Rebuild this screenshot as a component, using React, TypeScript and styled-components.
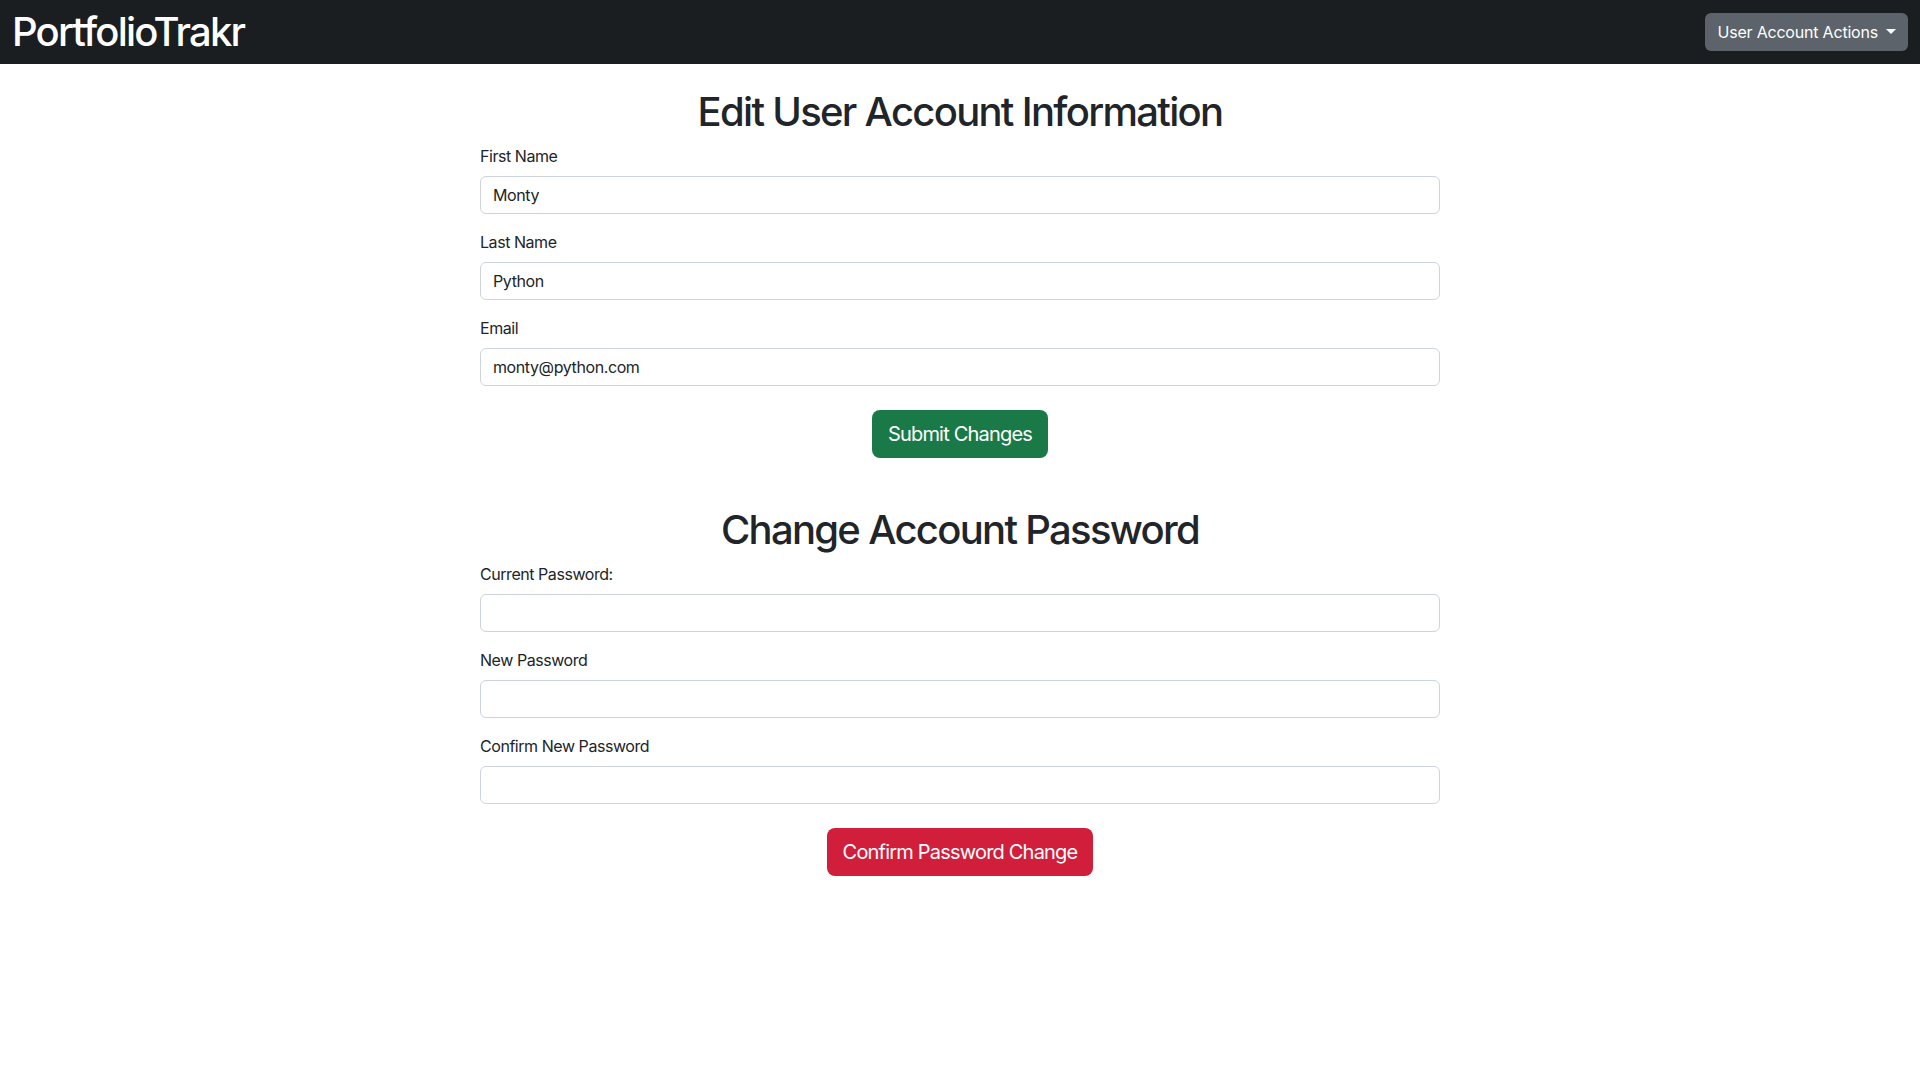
import { createGlobalStyle, styled } from 'styled-components';

const GlobalStyle = createGlobalStyle`
  body {
    margin: 0;
    font-family: Inter, "Noto Sans", "Liberation Sans", sans-serif;
    font-size: 16px;
    line-height: 1.5;
    color: #212529;
    background: #fff;
  }
  * {
    box-sizing: border-box;
  }
`;

const Navbar = styled.nav`
  height: 64px;
  padding: 0 12px;
  display: flex;
  justify-content: space-between;
  align-items: center;
  background: #1b1e21;
`;

const Brand = styled.a`
  font-size: 40px;
  font-weight: 500;
  letter-spacing: -1.8px;
  line-height: 1.2;
  color: #fff;
  text-decoration: none;
`;

const DropdownToggle = styled.button`
  height: 38px;
  padding: 0 12px;
  border: none;
  border-radius: 6px;
  background: #5c636a;
  color: #fff;
  font-family: inherit;
  font-size: 16px;
  display: flex;
  align-items: center;
  letter-spacing: -0.2px;

  &::after {
    content: '';
    display: inline-block;
    margin-left: 8px;
    margin-top: -2px;
    border-top: 5px solid #fff;
    border-left: 5px solid transparent;
    border-right: 5px solid transparent;
  }
`;

const Main = styled.main`
  width: 50%;
  margin: 0 auto;
  padding-top: 24px;
`;

const Section = styled.form<{ $gap?: number }>`
  display: flex;
  flex-direction: column;
  margin-top: ${(p) => p.$gap ?? 0}px;
`;

const Heading = styled.h1`
  margin: 0 0 8px;
  font-size: 40px;
  font-weight: 500;
  line-height: 1.2;
  letter-spacing: -1.7px;
  text-align: center;
`;

const Field = styled.div`
  margin-bottom: 16px;
`;

const Label = styled.label`
  display: block;
  margin-bottom: 8px;
  font-size: 16px;
  letter-spacing: -0.45px;
`;

const Input = styled.input`
  display: block;
  width: 100%;
  height: 38px;
  padding: 6px 12px;
  font-family: inherit;
  font-size: 16px;
  letter-spacing: -0.4px;
  color: #212529;
  border: 1px solid #ced4da;
  border-radius: 6px;
  background: #fff;
  outline: none;
`;

const Actions = styled.div`
  display: flex;
  justify-content: center;
  margin-top: 8px;
`;

const Button = styled.button<{ $variant: 'success' | 'danger' }>`
  height: 48px;
  padding: 0 16px;
  border: none;
  border-radius: 8px;
  font-family: inherit;
  font-size: 20px;
  letter-spacing: -0.8px;
  color: #fff;
  background: ${(p) => (p.$variant === 'success' ? '#1a7a47' : '#d11e3a')};
  cursor: pointer;
`;

const profileFields = [
  { label: 'First Name', value: 'Monty', type: 'text' },
  { label: 'Last Name', value: 'Python', type: 'text' },
  { label: 'Email', value: 'monty@python.com', type: 'email' },
];

const passwordFields = ['Current Password:', 'New Password', 'Confirm New Password'];

export default function App() {
  return (
    <>
      <GlobalStyle />
      <Navbar>
        <Brand href="#">PortfolioTrakr</Brand>
        <DropdownToggle type="button">User Account Actions</DropdownToggle>
      </Navbar>
      <Main>
        <Section onSubmit={(e) => e.preventDefault()}>
          <Heading>Edit User Account Information</Heading>
          {profileFields.map((f) => (
            <Field key={f.label}>
              <Label>{f.label}</Label>
              <Input type={f.type} defaultValue={f.value} />
            </Field>
          ))}
          <Actions>
            <Button $variant="success" type="submit">Submit Changes</Button>
          </Actions>
        </Section>
        <Section $gap={48} onSubmit={(e) => e.preventDefault()}>
          <Heading>Change Account Password</Heading>
          {passwordFields.map((label) => (
            <Field key={label}>
              <Label>{label}</Label>
              <Input type="password" />
            </Field>
          ))}
          <Actions>
            <Button $variant="danger" type="submit">Confirm Password Change</Button>
          </Actions>
        </Section>
      </Main>
    </>
  );
}
